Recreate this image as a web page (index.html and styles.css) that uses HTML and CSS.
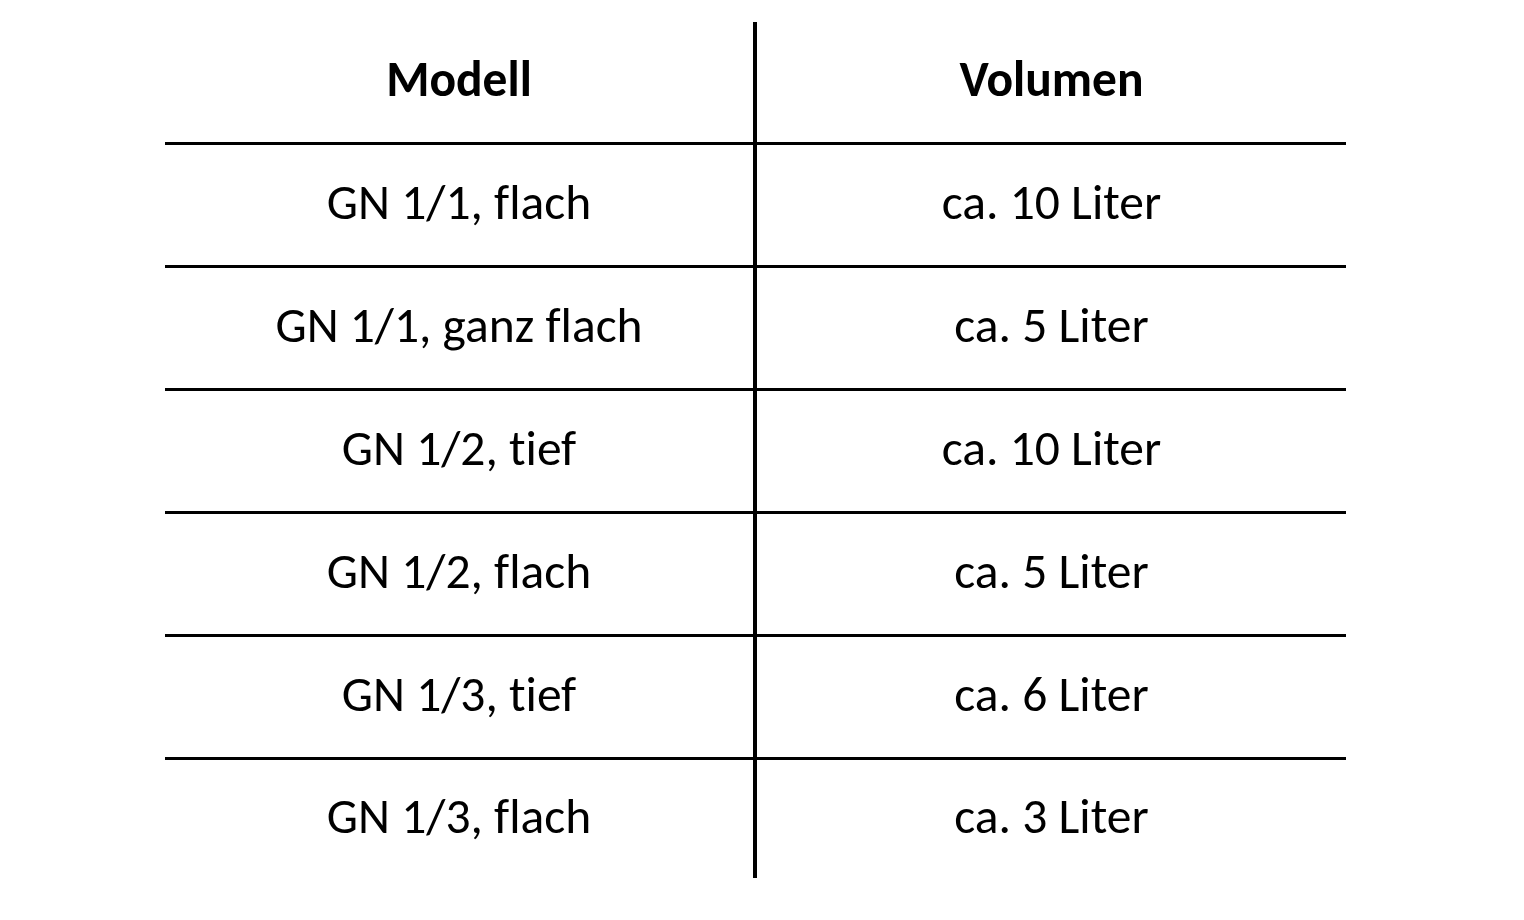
FILE: index.html
```html
<!DOCTYPE html>
<html lang="de">
<head>
<meta charset="utf-8">
<title>Tabelle</title>
<link rel="stylesheet" href="styles.css">
</head>
<body>
<div class="table">
  <div class="row head">
    <div class="cell left">Modell</div>
    <div class="cell right">Volumen</div>
  </div>
  <div class="row">
    <div class="cell left">GN 1/1, flach</div>
    <div class="cell right">ca. 10 Liter</div>
  </div>
  <div class="row">
    <div class="cell left">GN 1/1, ganz flach</div>
    <div class="cell right">ca. 5 Liter</div>
  </div>
  <div class="row">
    <div class="cell left">GN 1/2, tief</div>
    <div class="cell right">ca. 10 Liter</div>
  </div>
  <div class="row">
    <div class="cell left">GN 1/2, flach</div>
    <div class="cell right">ca. 5 Liter</div>
  </div>
  <div class="row">
    <div class="cell left">GN 1/3, tief</div>
    <div class="cell right">ca. 6 Liter</div>
  </div>
  <div class="row last">
    <div class="cell left">GN 1/3, flach</div>
    <div class="cell right">ca. 3 Liter</div>
  </div>
</div>
</body>
</html>
```
FILE: styles.css
```css
html, body {
  margin: 0;
  padding: 0;
  background: #ffffff;
}
body {
  font-family: "Carlito", "Open Sans", "Liberation Sans", sans-serif;
  color: #000000;
  font-variant-ligatures: none;
  font-feature-settings: "liga" 0, "clig" 0;
}
.table {
  width: 1181px;
  margin: 22px 0 0 165px;
  display: flex;
  flex-direction: column;
}
.row {
  display: grid;
  grid-template-columns: 592px 589px;
  height: 123px;
  border-top: 3px solid #000;
  box-sizing: border-box;
}
.row.head {
  border-top: none;
  height: 120px;
  font-weight: 700;
}
.row.last {
  height: 121px;
}
.cell {
  display: flex;
  align-items: center;
  justify-content: center;
  font-size: 49.5px;
  line-height: 1;
  padding-bottom: 4px;
  box-sizing: border-box;
}
.cell.left {
  border-right: 4px solid #000;
}
```
